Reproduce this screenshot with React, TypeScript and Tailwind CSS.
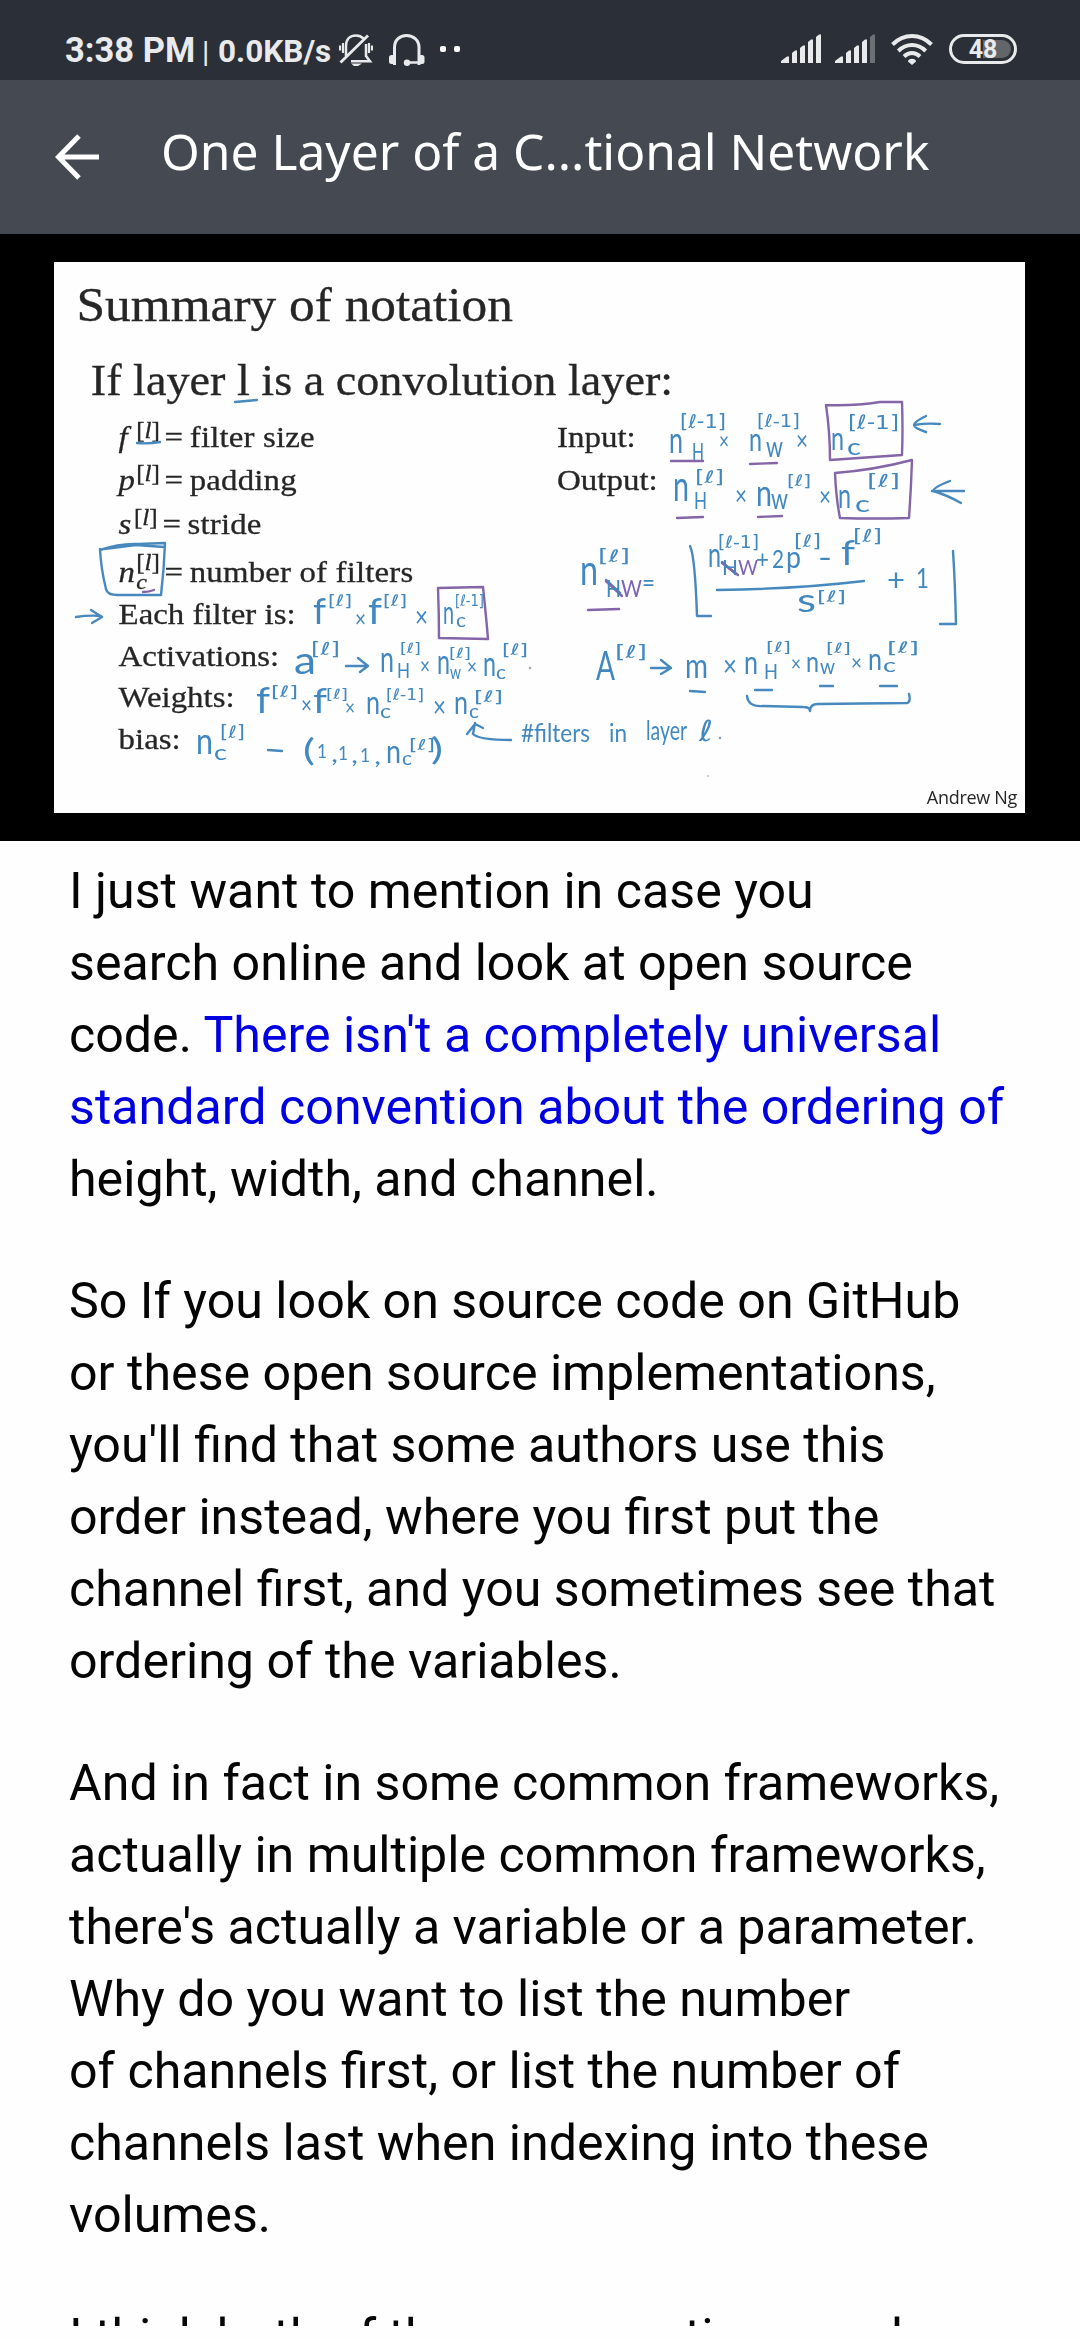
import React from "react";

type Mark = [x1: number, x2: number, baseline: number, size: number, text: string, purple?: boolean];

const marks: Mark[] = [
  // input
  [669, 683, 453, 36, "n"], [692, 704, 460, 24, "H"], [680, 726, 428, 19, "[ℓ-1]"], [719, 729, 449, 24, "×"],
  [749, 762, 451, 32, "n"], [766, 783, 457, 28, "w"], [757, 800, 427, 18, "[ℓ-1]"], [796, 808, 450, 26, "×"],
  [831, 844, 450, 32, "n"], [847, 861, 455, 24, "c"], [848, 899, 429, 20, "[ℓ-1]"],
  // output
  [673, 689, 501, 42, "n"], [694, 707, 509, 24, "H"], [695, 724, 483, 17, "[ℓ]"], [735, 747, 505, 26, "×"],
  [756, 772, 506, 36, "n"], [771, 788, 509, 28, "w"], [787, 811, 486, 16, "[ℓ]"], [819, 831, 506, 26, "×"],
  [838, 851, 508, 34, "n"], [855, 870, 512, 24, "c"], [867, 900, 487, 18, "[ℓ]"],
  // each filter
  [313, 326, 624, 36, "f"], [328, 352, 606, 16, "[ℓ]"], [355, 366, 627, 24, "×"],
  [368, 382, 624, 36, "f"], [383, 407, 606, 16, "[ℓ]"], [415, 428, 627, 28, "×"],
  [443, 454, 624, 32, "n"], [456, 466, 627, 20, "c"], [455, 484, 606, 16, "[ℓ-1]"],
  // activations
  [294, 316, 674, 38, "a"], [311, 340, 655, 18, "[ℓ]"], [380, 394, 672, 36, "n"], [397, 410, 678, 22, "H"],
  [400, 421, 653, 14, "[ℓ]"], [420, 430, 674, 24, "×"], [437, 450, 674, 34, "n"], [450, 461, 679, 20, "w"],
  [449, 471, 658, 14, "[ℓ]"], [467, 477, 674, 22, "×"], [483, 496, 676, 34, "n"], [496, 506, 679, 20, "c"],
  [502, 528, 655, 16, "[ℓ]"],
  // weights
  [256, 270, 713, 36, "f"], [271, 298, 697, 16, "[ℓ]"], [301, 312, 713, 24, "×"], [313, 327, 713, 34, "f"],
  [326, 348, 699, 14, "[ℓ]"], [345, 355, 715, 22, "×"], [366, 380, 714, 32, "n"], [380, 391, 718, 20, "c"],
  [386, 424, 700, 16, "[ℓ-1]"], [433, 446, 717, 28, "×"], [454, 468, 714, 32, "n"], [469, 479, 718, 20, "c"],
  [474, 503, 702, 16, "[ℓ]"],
  // bias
  [196, 213, 754, 36, "n"], [214, 227, 760, 22, "c"], [220, 245, 738, 17, "[ℓ]"], [303, 315, 761, 30, "("],
  [317, 327, 758, 20, "1"], [331, 338, 762, 24, ","], [338, 348, 760, 20, "1"], [351, 358, 763, 24, ","],
  [360, 370, 762, 20, "1"], [374, 381, 764, 24, ","], [386, 401, 763, 32, "n"], [402, 412, 765, 20, "c"],
  [409, 435, 750, 15, "[ℓ]"], [431, 443, 760, 30, ")"], [521, 590, 742, 25, "#filters"], [609, 627, 742, 25, "in"],
  [646, 687, 740, 26, "layer"], [699, 713, 741, 29, "ℓ"],
  // output height / width formula
  [580, 598, 585, 42, "n"], [598, 630, 562, 17, "[ℓ]"], [606, 621, 597, 23, "H"], [621, 642, 597, 23, "W", true],
  [642, 655, 592, 26, "="], [708, 721, 567, 34, "n"], [718, 759, 548, 17, "[ℓ-1]"], [722, 738, 575, 21, "H"],
  [738, 758, 575, 21, "W", true], [756, 769, 568, 25, "+"], [772, 784, 568, 25, "2"], [786, 801, 568, 30, "p"],
  [794, 821, 547, 17, "[ℓ]"], [818, 832, 568, 28, "-"], [841, 855, 565, 34, "f"], [853, 882, 542, 18, "[ℓ]"],
  [797, 816, 612, 32, "s"], [817, 846, 602, 16, "[ℓ]"], [887, 905, 591, 30, "+"], [916, 929, 588, 26, "1"],
  // batch activations
  [596, 615, 680, 40, "A"], [615, 647, 658, 18, "[ℓ]"], [685, 708, 678, 35, "m"], [723, 737, 676, 28, "×"],
  [744, 758, 674, 32, "n"], [764, 778, 679, 21, "H"], [766, 791, 652, 14, "[ℓ]"], [791, 801, 671, 22, "×"],
  [806, 819, 672, 28, "n"], [820, 835, 674, 22, "w"], [826, 851, 653, 14, "[ℓ]"], [851, 862, 670, 22, "×"],
  [868, 882, 670, 30, "n"], [883, 896, 672, 20, "c"], [887, 919, 653, 16, "[ℓ]"],
];

const bluePaths = [
  "M235 402q11-1 22-2", "M137 443q12 1 23-1",
  "M100 550q20-7 39-6l26-1q-1 27-4 52h-43q-11 0-12-6-5-20-6-40M104 549l32-4 28 2",
  "M76 617q13-2 25-1M91 610l11 7-10 6",
  "M346 666h22M358 658l10 8-8 6", "M268 750l14 1",
  "M511 740q-32 0-38-6l2-11M467 734l8-10 8 4",
  "M940 424q-14-1-26 1M926 416q-12 6-12 9t12 7",
  "M964 491h-32M950 481q-16 6-17 10 14 4 28 12",
  "M606 580l14 13", "M722 562l14 12",
  "M690 546q5 10 7 70h14", "M717 590q80-1 147-9",
  "M953 551q2 30 3 73h-16", "M651 668h20M661 660l10 8-10 6",
  "M690 691l15 1", "M755 690h17", "M820 686h13", "M880 686h17",
  "M747 696q1 11 16 10l40 1q7 0 7 4 0-7 8-7l89-1q4-1 2-9",
];

const purplePaths = [
  "M438 588l45-1q3 28 5 52l-49-1q0-24-1-50",
  "M826 405q28 1 54-3h22q1 28 0 53l-72 5q0-28-4-55",
  "M835 473q39-3 77-13-1 30-3 58-36 1-69 0-4-20-5-45",
  "M671 461h32", "M750 464l27-1", "M677 518l26-1", "M758 517l24-1", "M588 610l31-1",
  "M606 581l16 15", "M722 563l16 12", "M143 592q6 0 11-2",
];

function Annotations() {
  return (
    <svg className="absolute inset-0 h-full w-full" viewBox="54 262 971 551">
      <g fill="none" strokeLinecap="round" strokeLinejoin="round" strokeWidth="2.4">
        {bluePaths.map((d) => <path key={d} d={d} stroke="#4789bf" />)}
        {purplePaths.map((d) => <path key={d} d={d} stroke="#8365a8" />)}
      </g>
      {marks.map(([x1, x2, y, size, text, purple], i) => (
        <text key={i} x={x1} y={y} fontSize={size} fill={purple ? "#7c63b4" : "#4187c0"}
          fontFamily={text.includes("ℓ") ? "'DejaVu Sans', sans-serif" : "Lato, sans-serif"}
          textLength={x2 - x1} lengthAdjust="spacingAndGlyphs">{text}</text>
      ))}
      <circle cx="720" cy="738" r="1.2" fill="#7d93b5" />
      <circle cx="530" cy="668" r="1.2" fill="#9aa5b5" />
      <circle cx="708" cy="776" r="1" fill="#b5bcc8" />
    </svg>
  );
}

function Sup({ sub }: { sub?: string }) {
  return (
    <span className="relative inline-block h-[42px] w-[22px]">
      <span className={`absolute left-0 text-[23px] leading-none ${sub ? "top-0" : "top-[3px]"}`}>[<i>l</i>]</span>
      {sub && <i className="absolute top-[20px] left-0 text-[22px] leading-none">{sub}</i>}
      &nbsp;
    </span>
  );
}

function Definition({ symbol, symbolWidth, sub, text, className }: {
  symbol: string; symbolWidth: string; sub?: string; text: string; className: string;
}) {
  return (
    <div className={`flex h-[42px] items-baseline leading-[42px] ${className}`}>
      <i className={symbolWidth}>{symbol}</i>
      <Sup sub={sub} />
      <span className="ml-[4px] w-[23px]">=</span>
      <span className="tracking-[0.15px]">{text}</span>
    </div>
  );
}

function Slide() {
  return (
    <section className="h-[607px] bg-black pt-[28px] pl-[54px]">
      <div className="relative h-[551px] w-[971px] overflow-hidden bg-[#fefefe] pt-[3px] font-['Liberation_Serif',serif] text-[#262626] blur-[0.5px] [-webkit-text-stroke:0.3px]">
        <h2 className="origin-left scale-x-[1.07] pl-[21px] text-[48px] leading-[80px]">Summary of notation</h2>
        <h3 className="-mt-[2px] origin-left scale-x-[1.05] pl-[35px] text-[44px] leading-[76px]">If layer l is a convolution layer:</h3>
        <div className="-mt-[3px] flex text-[30px]">
          <div className="w-[438px] shrink-0 origin-left scale-x-[1.095] pl-[59px]">
            <Definition symbol="f" symbolWidth="w-[16px]" text="filter size" className="" />
            <Definition symbol="p" symbolWidth="w-[16px]" text="padding" className="mt-[1px]" />
            <Definition symbol="s" symbolWidth="w-[14px]" text="stride" className="mt-[2px]" />
            <Definition symbol="n" symbolWidth="w-[16px]" sub="c" text="number of filters" className="mt-[6px]" />
            <p className="leading-[41.5px]">Each filter is:</p>
            <p className="leading-[41.5px]">Activations:</p>
            <p className="leading-[41.5px]">Weights:</p>
            <p className="leading-[41.5px]">bias:</p>
          </div>
          <div className="origin-left scale-x-[1.1] pl-[59px] leading-[42.5px]">
            <p>Input:</p>
            <p>Output:</p>
          </div>
        </div>
        <p className="absolute right-[8px] bottom-[3px] font-['Open_Sans',sans-serif] text-[18px] leading-[26px] tracking-[-0.3px] [-webkit-text-stroke:0px]">Andrew Ng</p>
        <div className="absolute inset-0 [-webkit-text-stroke:0px]"><Annotations /></div>
      </div>
    </section>
  );
}

function Signal({ weak = false }: { weak?: boolean }) {
  return (
    <svg className="h-[30px] w-[40px]" viewBox="0 0 40 30" fill="#e9eaeb">
      <path d="M0 29v-2l6-4.500h2V29z" />
      <path d="M11 29V19l3-2.500h2V29z" />
      <path d="M19 29V14l3-2.500h2V29z" />
      <path d="M27 29V8l3-2.500h2V29z" />
      <path d="M35 29V3l3-2.500h2V29z" opacity={weak ? 0.35 : 1} />
    </svg>
  );
}

function StatusBar() {
  return (
    <div className="flex h-[80px] items-start bg-[#2b2f37] pt-[34px] pl-[65px] text-[#e9eaeb] font-[Roboto,sans-serif]">
      <div className="flex w-[274px] items-baseline leading-[32px] whitespace-nowrap">
        <span className="w-[137px] text-[34.500px] font-bold">3:38 PM</span>
        <span className="w-[16px] text-[30px]">|</span>
        <span className="text-[31.500px] font-bold">0.0KB/s</span>
      </div>
      <svg className="h-[34px] w-[34px]" viewBox="0 0 34 34" fill="none" stroke="currentColor" strokeWidth="2.2">
        <path d="M7 22V12C7 5 11 1.5 17 1.5c3 0 5.500 1 7.500 3M27 10v12l4 5.200H12" strokeWidth="2.500" />
        <path d="M1.500 28.500L29 1.500" strokeWidth="2.800" />
        <path d="M4 9v10M1 11.500v5M30 9v10M33 11.500v5" />
        <path d="M12 29.500h11L19 32h-4z" fill="currentColor" stroke="none" />
      </svg>
      <svg className="ml-[16px] h-[34px] w-[36px]" viewBox="0 0 36 34" fill="none" stroke="currentColor" strokeWidth="3">
        <path d="M5.500 31V13.500C5.500 6 11 1.500 17.500 1.500S30 6 30 13.500V31" />
        <path d="M18 28.500h13" strokeWidth="2.500" />
        <rect x="0" y="21" width="6" height="9" rx="2.500" fill="currentColor" stroke="none" />
        <rect x="29.500" y="21" width="6" height="9" rx="2.500" fill="currentColor" stroke="none" />
        <circle cx="18" cy="28.700" r="3.200" fill="currentColor" stroke="none" />
      </svg>
      <div className="ml-[15px] flex gap-[8px] pt-[12px]">
        <span className="size-[6px] rounded-xs bg-white" />
        <span className="size-[6px] rounded-xs bg-white" />
      </div>
      <div className="ml-auto flex pr-[63px]">
        <Signal />
        <div className="ml-[14px] flex"><Signal weak /></div>
        <svg className="ml-[16px] h-[31px] w-[42px]" viewBox="0 0 42 31" fill="none" stroke="#e9eaeb" strokeWidth="4">
          <path d="M1.500 10.500C13-.8 29-.8 40.500 10.500M7.300 17c8-8 19.400-8 27.400 0M13 22.500c5-4.600 11-4.600 16 0" />
          <path d="M21 24.800c-2.200 0-4 1-4 2.600L21 31l4-3.600c0-1.600-1.800-2.600-4-2.600z" fill="#e9eaeb" stroke="none" />
        </svg>
        <div className="ml-[16px] flex h-[30px] w-[68px] items-center rounded-full border-3 border-[#e9eaeb] p-[3px]">
          <div className="flex h-[18px] w-full items-center justify-center rounded-full bg-linear-to-r from-transparent from-50% to-[#62656a] to-50% text-[25px] leading-none font-bold">
            48
          </div>
        </div>
      </div>
    </div>
  );
}

const paragraphs: React.ReactNode[][] = [
  [
    "I just want to mention in case you",
    "search online and look at open source",
    <>code. <span className="text-[#0000e0]">There isn't a completely universal</span></>,
    <span className="text-[#0000e0]">standard convention about the ordering of</span>,
    "height, width, and channel.",
  ],
  [
    "So If you look on source code on GitHub",
    "or these open source implementations,",
    "you'll find that some authors use this",
    "order instead, where you first put the",
    "channel first, and you sometimes see that",
    "ordering of the variables.",
  ],
  [
    "And in fact in some common frameworks,",
    "actually in multiple common frameworks,",
    "there's actually a variable or a parameter.",
    "Why do you want to list the number",
    "of channels first, or list the number of",
    "channels last when indexing into these",
    "volumes.",
  ],
  ["I think both of these conventions work"],
];

export default function App() {
  return (
    <div className="h-[2340px] w-[1080px] overflow-hidden bg-[#fefefe]">
      <StatusBar />
      <header className="flex h-[154px] items-center bg-[#444952] pl-[55px] text-white">
        <svg className="h-[46px] w-[45px]" viewBox="0 0 45 46" fill="none" stroke="currentColor" strokeWidth="5">
          <path d="M44 23H4M24 2L3.500 23 24 44" />
        </svg>
        <h1 className="-mt-[12px] ml-[61px] font-['Noto_Sans',sans-serif] text-[49.700px] leading-[68px] whitespace-nowrap">
          One Layer of a C...tional Network
        </h1>
      </header>
      <Slide />
      <main className="h-[1485px] overflow-hidden pt-[14px] pl-[69px] font-[Roboto,sans-serif] text-[50.15px] leading-[72.07px] text-[#050505]">
        {paragraphs.map((lines, i) => (
          <p key={i} className="mb-[49.500px] whitespace-nowrap">
            {lines.map((line, j) => <span key={j} className="block">{line}</span>)}
          </p>
        ))}
      </main>
    </div>
  );
}
